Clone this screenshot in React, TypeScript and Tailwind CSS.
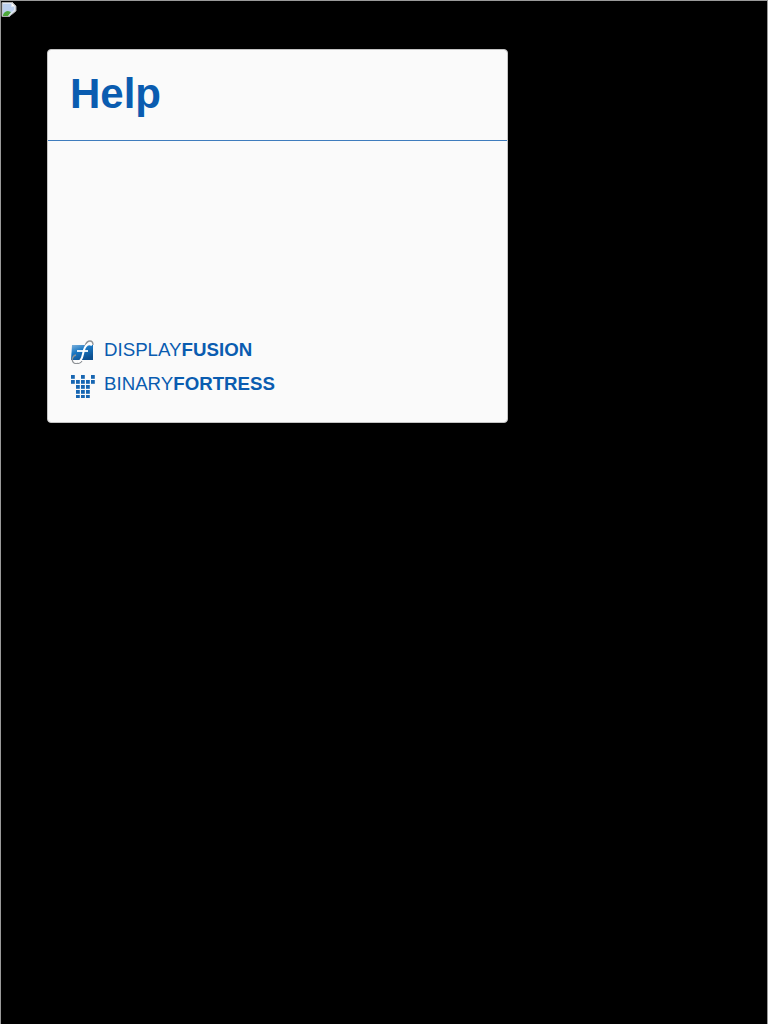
import type { ReactNode } from "react";

function BrokenImage() {
  return (
    <svg width="16" height="16" viewBox="0 0 16 16" className="block">
      <path d="M1 1h10l4 4v5l-7 6H1z" fill="#dfe6f2" />
      <path d="M11 1v4h4z" fill="#ffffff" />
      <path d="M2 3h8v3h3v3l-6 5H2z" fill="#bcd0ee" />
      <path d="M2 14c1-3 3-4 5-4 1 0 2 1 3 1l-3 4H2z" fill="#4fa83d" />
      <path d="M1 1.500h10l4 4v4.500L8 15.500H1z" fill="none" stroke="#a8a8a8" strokeWidth="1" />
    </svg>
  );
}

function FusionIcon() {
  return (
    <svg width="24" height="24" viewBox="0 0 24 24" className="block mt-[4px]">
      <defs>
        <linearGradient id="panel" x1="0" y1="0" x2="0.6" y2="1">
          <stop offset="0" stopColor="#7fb2dc" />
          <stop offset="0.45" stopColor="#1a78c4" />
          <stop offset="1" stopColor="#0d4f8f" />
        </linearGradient>
      </defs>
      <path d="M1 5h21v15H0z" fill="url(#panel)" />
      <path d="M5 15C1 16 0 21 3 23c2 1 6 1 8-2" fill="none" stroke="#8e9296" strokeWidth="1.3" />
      <path d="M14 6c1-3 3-5 5-5s3 1 3 4" fill="none" stroke="#8e9296" strokeWidth="1.3" />
      <path d="M7 22c3-1 4-3 5-8s2-8 4-9c1-1 3-1 5 0" fill="none" stroke="#ffffff" strokeWidth="2" />
      <path d="M6 11h11" stroke="#ffffff" strokeWidth="1.8" />
    </svg>
  );
}

const SIDE_DOTS = [
  [0, 1], [10, 1], [20, 1],
  [0, 6], [20, 6],
];

function FortressIcon() {
  const grid = [6, 11, 16, 21].flatMap((y) => [5, 10, 15].map((x) => [x, y]));
  return (
    <svg width="24" height="24" viewBox="0 0 24 24" className="block mt-[4px]">
      {[...SIDE_DOTS, ...grid].map(([x, y]) => (
        <rect key={`${x}-${y}`} x={x} y={y} width="3.800" height="3.800" fill="#1766b2" />
      ))}
    </svg>
  );
}

function LinkRow({ icon, light, bold }: { icon: ReactNode; light: string; bold: string }) {
  return (
    <div className="flex items-center gap-[9px] h-[34px]">
      {icon}
      <span className="text-[18.7px] leading-none text-[#0a5cb0]">
        {light}
        <span className="font-bold">{bold}</span>
      </span>
    </div>
  );
}

export default function App() {
  return (
    <div className="h-[1024px] w-[768px] bg-black border-x border-t border-[#9a9a9a] font-['Liberation_Sans',Arial,sans-serif] overflow-hidden">
      <BrokenImage />
      <div className="ml-[46px] mt-[32px] w-[461px] h-[374px] rounded-[4px] bg-[#fafafa] border border-[#c4c4c4] flex flex-col">
        <div className="h-[91px] border-b border-[#3f7cbd] px-[22px] pb-[2px] flex items-center">
          <h1 className="text-[42px] leading-none font-bold text-[#0a5cb0]">Help</h1>
        </div>
        <div className="mt-auto px-[23px] pb-[21px] flex flex-col">
          <LinkRow icon={<FusionIcon />} light="DISPLAY" bold="FUSION" />
          <LinkRow icon={<FortressIcon />} light="BINARY" bold="FORTRESS" />
        </div>
      </div>
    </div>
  );
}
